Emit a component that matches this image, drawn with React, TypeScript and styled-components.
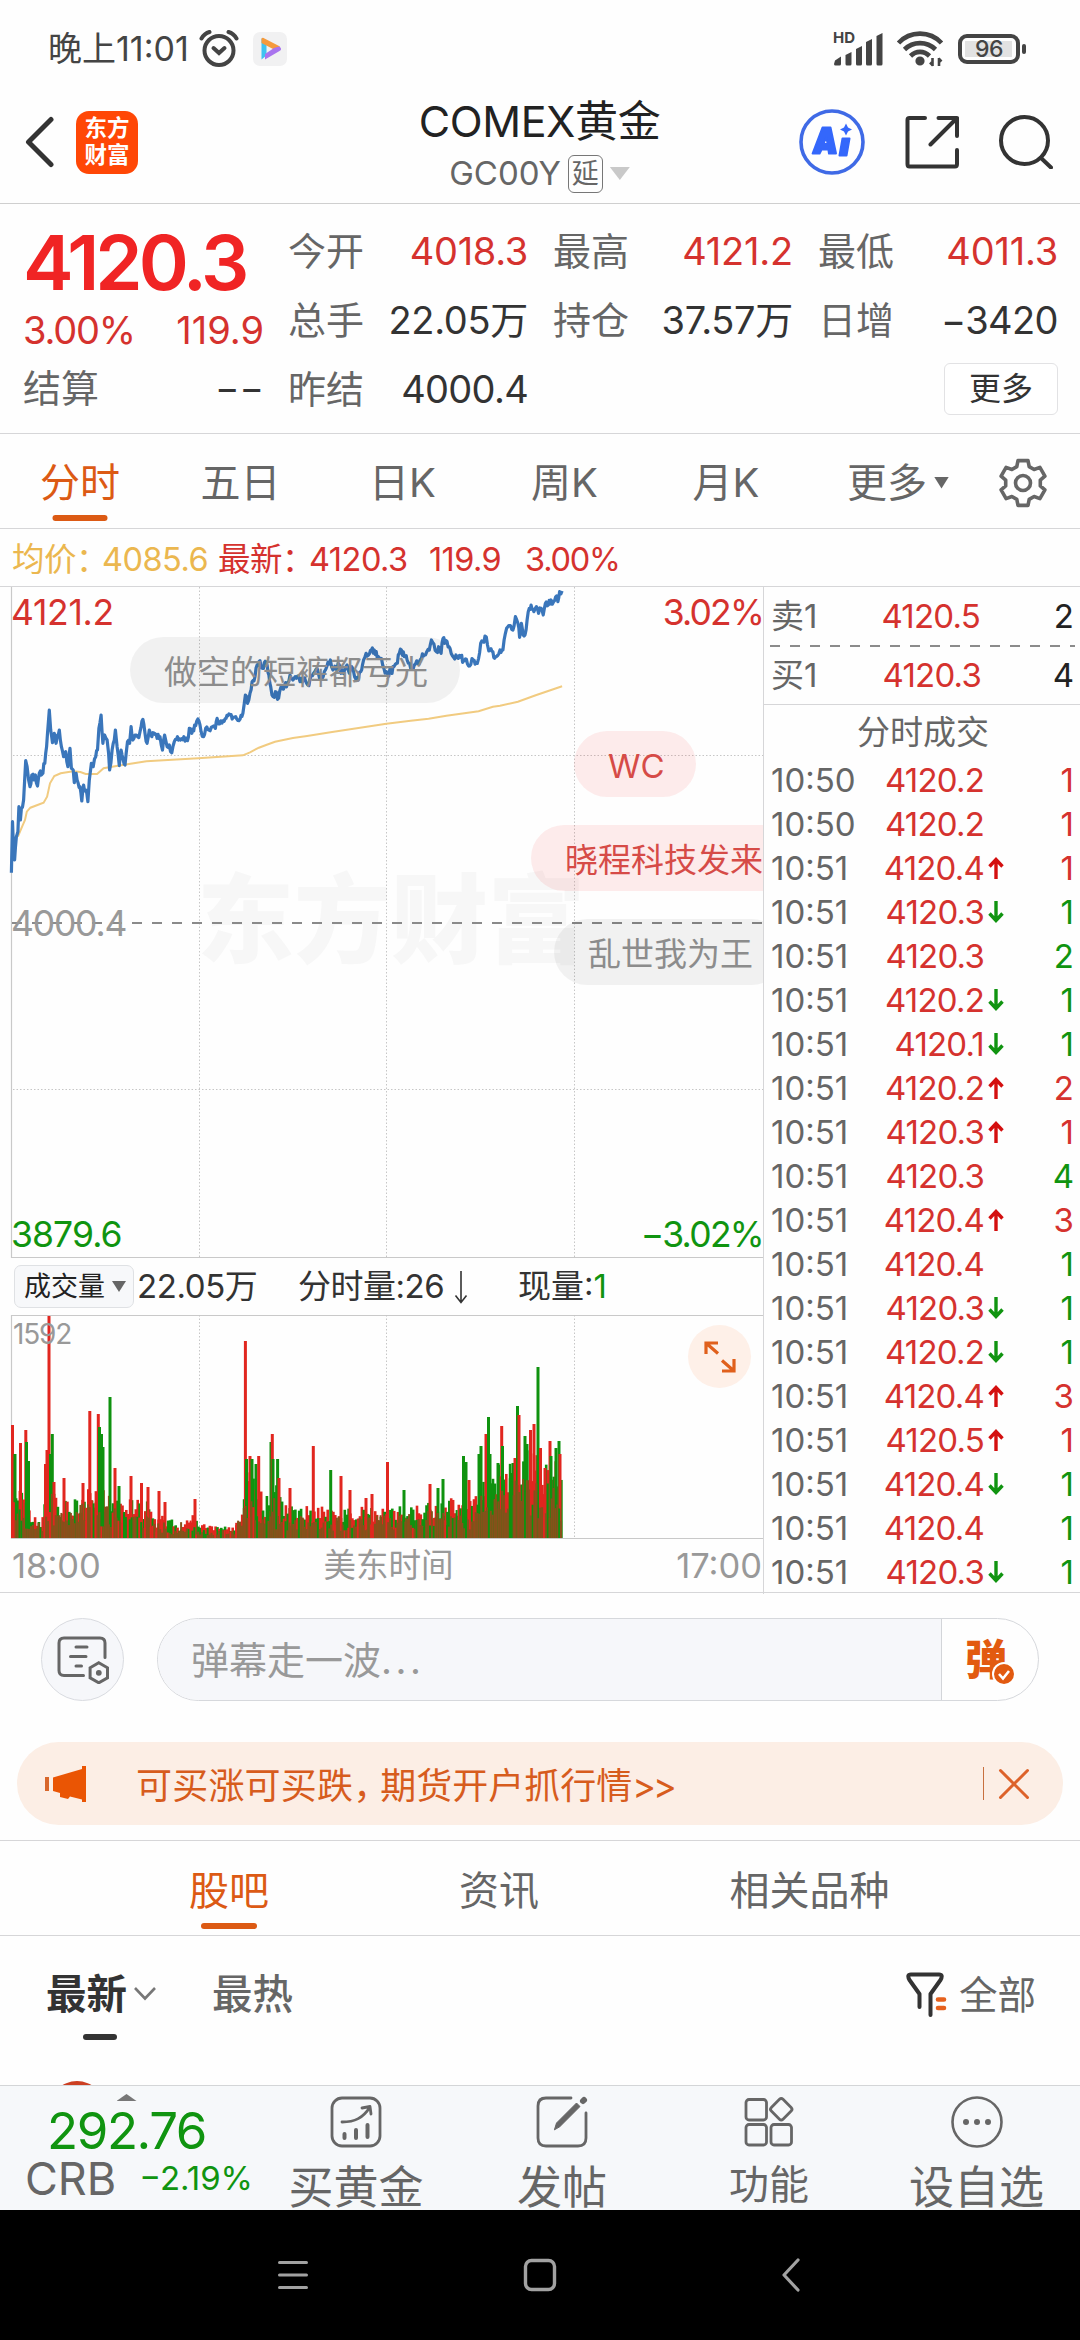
import React from "react";
import styled, { createGlobalStyle } from "styled-components";

const RED = "#d5322e";
const GREEN = "#109410";
const ORANGE = "#dc5a14";
const GREY = "#666666";
const INK = "#333333";
const LINE = "#d6d6d8";

const GlobalStyle = createGlobalStyle`
  * { box-sizing: border-box; }
  body { margin: 0; background: #fff; }
  svg { display: block; flex: none; }
`;

const Screen = styled.div`
  width: 1080px;
  height: 2340px;
  overflow: hidden;
  display: flex;
  flex-direction: column;
  background: #fefefe;
  color: ${INK};
  font-family: Inter, "Noto Sans CJK SC", sans-serif;
  font-size: 38px;
  line-height: 1;
  white-space: nowrap;
`;

const Text = styled.span<{ $size?: number; $color?: string; $track?: number; $weight?: number }>`
  font-size: ${(p) => p.$size ?? 38}px;
  color: ${(p) => p.$color ?? "inherit"};
  letter-spacing: ${(p) => p.$track ?? 0}px;
  font-weight: ${(p) => p.$weight ?? 400};
  line-height: 1;
  white-space: pre;
`;

/* ---------- status bar ---------- */

const StatusBar = styled.header`
  height: 98px;
  padding: 0 60px 0 48px;
  display: flex;
  align-items: center;
  justify-content: space-between;
  color: #444;
`;
const StatusGroup = styled.div<{ $gap: number }>`
  display: flex;
  align-items: center;
  gap: ${(p) => p.$gap}px;
`;

const AlarmIcon = () => (
  <svg width="40" height="38" viewBox="0 0 40 38" fill="none" stroke="#444" strokeWidth="4" strokeLinecap="round">
    <circle cx="20" cy="20.500" r="14.500" />
    <path d="M14.500 18l5.500 5 5.500-5" />
    <path d="M2.500 8.500C4.500 5 7 3 10.500 2M29.500 2c3.500 1 6 3 8 6.500" />
  </svg>
);

const PlayBadge = () => (
  <svg width="34" height="34" viewBox="0 0 34 34">
    <rect width="34" height="34" rx="7" fill="#f1f1f2" />
    <path d="M8.500 6.500l5 3v14l-5 4z" fill="#3fc3f0" />
    <path d="M8.500 6.500c.8-1 2-.8 3 0L27 14.500l-5 3.500L8.500 11z" fill="#f59a3c" />
    <path d="M28 17c0 1-.5 1.500-1.500 2L12 27.500v-5.500l9-6 5-1.500c1.500.8 2 1.500 2 2.500z" fill="#a974ee" />
  </svg>
);

const SignalIcon = () => (
  <svg width="52" height="44" viewBox="0 -4 52 44" fill="#444">
    <text x="1" y="12" fontSize="15" fontWeight="700" fontFamily="Inter, sans-serif">HD</text>
    <path d="M3 29.500l6-4V33q0 1.500-1.500 1.500h-4Q2 34.500 2 33z" />
    <path d="M13.500 24l6-3v12q0 1.500-1.500 1.500h-3q-1.500 0-1.500-1.500z" />
    <path d="M24 18l6-3v18q0 1.500-1.500 1.500h-3Q24 34.500 24 33z" />
    <path d="M34 11l6-3v25q0 1.500-1.500 1.500h-3Q34 34.500 34 33z" />
    <path d="M44.500 5l6-3v31q0 1.500-1.500 1.500h-3q-1.500 0-1.500-1.500z" />
  </svg>
);

const WifiIcon = () => (
  <svg width="48" height="38" viewBox="0 0 48 38" fill="none" stroke="#444" strokeWidth="4.600">
    <path d="M2.500 13C14 .5 34 .5 45.500 13" />
    <path d="M8.500 19.500c8.500-8.500 22.500-8.500 31 0" />
    <path d="M14.500 26c5.500-5.500 13.500-5.500 19 0" />
    <circle cx="24" cy="31" r="2.300" />
    <path d="M36.500 28v8M43 36v-8M34 32.500l3 3M45.500 31.500l-3-3" strokeWidth="2.600" />
  </svg>
);

const Battery = styled.div`
  position: relative;
  width: 62px;
  height: 30px;
  padding: 3px;
  border: 4px solid #444;
  border-radius: 9px;
  display: flex;
  align-items: center;
  justify-content: center;
  background: linear-gradient(#e2e2e2, #e2e2e2) 3px 50% / 47px 16px no-repeat;
  &::after {
    content: "";
    position: absolute;
    right: -10px;
    top: 6px;
    width: 4px;
    height: 10px;
    border-radius: 2px;
    background: #444;
  }
`;

/* ---------- title bar ---------- */

const TitleBar = styled.div`
  height: 106px;
  padding: 0 27px 0 25px;
  border-bottom: 1px solid #cfcfcf;
  display: grid;
  grid-template-columns: 330px 1fr 330px;
  align-items: center;
`;
const TitleSide = styled.div<{ $end?: boolean; $gap: number }>`
  display: flex;
  align-items: center;
  justify-content: ${(p) => (p.$end ? "flex-end" : "flex-start")};
  gap: ${(p) => p.$gap}px;
  padding-bottom: 17px;
`;
const Logo = styled.div`
  width: 62px;
  height: 63px;
  border-radius: 13px;
  background: #ff4706;
  color: #fff;
  display: flex;
  flex-direction: column;
  align-items: center;
  justify-content: center;
  gap: 5px;
  padding-bottom: 1px;
`;
const TitleMid = styled.div`
  display: flex;
  flex-direction: column;
  align-items: center;
  gap: 12px;
  padding: 0 0 9px 1px;
`;
const SubTitle = styled.div`
  display: flex;
  align-items: center;
  gap: 7px;
  height: 38px;
  color: ${GREY};
`;
const DelayTag = styled.span`
  width: 35px;
  height: 38px;
  border: 1.500px solid #777;
  border-radius: 6px;
  display: flex;
  align-items: center;
  justify-content: center;
  font-size: 27px;
`;
const Triangle = styled.i<{ $w: number; $h: number; $color: string; $up?: boolean }>`
  width: ${(p) => p.$w}px;
  height: ${(p) => p.$h}px;
  background: ${(p) => p.$color};
  clip-path: ${(p) => (p.$up ? "polygon(50% 0, 100% 100%, 0 100%)" : "polygon(0 0, 100% 0, 50% 100%)")};
`;

const BackIcon = () => (
  <svg width="30" height="52" viewBox="0 0 30 52" fill="none" stroke={INK} strokeWidth="5" strokeLinecap="round" strokeLinejoin="round">
    <path d="M26 3.500L3.500 26 26 48.500" />
  </svg>
);

const AiIcon = () => (
  <svg width="66" height="66" viewBox="0 0 66 66">
    <circle cx="33" cy="33" r="31" fill="none" stroke="#3f6ae6" strokeWidth="3.600" />
    <g fill="#3467fb" stroke="#3467fb" strokeWidth="2" strokeLinejoin="round">
      <path fillRule="evenodd" d="M23.500 18.500h8l5.500 26h-7l-.6-4h-6.800l-2 4h-7zm3.800 9.500l-2.800 7h4.200z" />
      <path d="M43.500 29.500h7l-3 17h-7z" />
    </g>
    <path d="M47 14.500l2 4 4 2-4 2-2 4-2-4-4-2 4-2z" fill="#3467fb" />
  </svg>
);

const ShareIcon = () => (
  <svg width="54" height="54" viewBox="0 0 54 54" fill="none" stroke={INK} strokeWidth="4" strokeLinecap="round" strokeLinejoin="round">
    <path d="M20 3H4.500Q2.500 3 2.500 5v44q0 2.500 2 2.500h45.500q2 0 2-2.500V35" />
    <path d="M33.500 3H52v18M52 3L25.500 29.500" />
  </svg>
);

const SearchIcon = () => (
  <svg width="54" height="54" viewBox="0 0 54 54" fill="none" stroke={INK} strokeWidth="4" strokeLinecap="round">
    <circle cx="25.500" cy="25.500" r="23.500" />
    <path d="M42 43l10 9.500" />
  </svg>
);

/* ---------- quote block ---------- */

const Quote = styled.section`
  height: 230px;
  border-bottom: 1px solid ${LINE};
  padding: 12px 22px 0 23px;
  display: flex;
  justify-content: space-between;
`;
const QuoteLead = styled.div`
  width: 241px;
  display: flex;
  flex-direction: column;
`;
const LeadRow = styled.div<{ $h: number }>`
  height: ${(p) => p.$h}px;
  display: flex;
  align-items: center;
  justify-content: space-between;
`;
const QuoteGrid = styled.div`
  width: 770px;
  display: grid;
  grid-template-columns: 240px 240px 240px;
  grid-auto-rows: 69px;
  column-gap: 25px;
`;
const Cell = styled.div<{ $end?: boolean }>`
  display: flex;
  align-items: center;
  justify-content: ${(p) => (p.$end ? "flex-end" : "space-between")};
`;
const MoreButton = styled.button`
  width: 114px;
  height: 52px;
  border: 1.500px solid #e2e2e4;
  border-radius: 6px;
  background: #fff;
  color: ${INK};
  font: inherit;
  font-size: 32px;
  padding: 0;
`;

const quotes: [string, string, string, number][] = [
  ["今开", "4018.3", RED, -0.3],
  ["最高", "4121.2", RED, -0.2],
  ["最低", "4011.3", RED, -0.2],
  ["总手", "22.05万", INK, -0.3],
  ["持仓", "37.57万", INK, -0.3],
  ["日增", "−3420", INK, -0.6],
  ["昨结", "4000.4", INK, -0.7],
];

/* ---------- period tabs ---------- */

const PeriodTabs = styled.nav`
  height: 95px;
  border-bottom: 1px solid ${LINE};
  display: grid;
  grid-template-columns: 160px 161px 163px 161px 162px 182px 68px;
  color: ${GREY};
`;
const PeriodTab = styled.div<{ $active?: boolean }>`
  position: relative;
  display: flex;
  align-items: center;
  justify-content: center;
  gap: 7px;
  font-size: 40px;
  padding-top: 3px;
  color: ${(p) => (p.$active ? ORANGE : GREY)};
`;
const Underline = styled.i<{ $w: number; $color: string; $bottom: number }>`
  position: absolute;
  left: 50%;
  bottom: ${(p) => p.$bottom}px;
  width: ${(p) => p.$w}px;
  height: 6px;
  border-radius: 3px;
  transform: translateX(-50%);
  background: ${(p) => p.$color};
`;

const GearIcon = () => {
  const pts: string[] = [];
  for (let i = 0; i < 6; i++) {
    const a = (i * 60 - 90) * (Math.PI / 180);
    const at = (r: number, d: number) => `${(26 + r * Math.cos(a + d)).toFixed(1)} ${(26 + r * Math.sin(a + d)).toFixed(1)}`;
    pts.push(at(17.5, -0.36), at(23, -0.22), at(23, 0.22), at(17.5, 0.36));
  }
  return (
    <svg width="52" height="52" viewBox="0 0 52 52" fill="none" stroke={GREY} strokeWidth="3.600" strokeLinejoin="round">
      <path d={`M${pts.join("L")}Z`} />
      <circle cx="26" cy="26" r="7.500" />
    </svg>
  );
};

/* ---------- market area ---------- */

const AvgBar = styled.div`
  height: 58px;
  padding: 5px 0 0 12px;
  border-bottom: 1px solid ${LINE};
  display: grid;
  grid-template-columns: 90px 116px 91px 120px 96px auto;
  align-items: center;
`;
const Market = styled.section`
  height: 1006px;
  border-bottom: 1px solid ${LINE};
  display: grid;
  grid-template-columns: 763px 1fr;
`;
const ChartColumn = styled.div`
  overflow: hidden;
  display: flex;
  flex-direction: column;
`;
const PriceChart = styled.div`
  position: relative;
  height: 671px;
  overflow: hidden;
`;
const Layer = styled.svg`
  position: absolute;
  inset: 0;
`;
const Mark = styled.span<{ $x?: number; $r?: number; $y: number; $size?: number; $color: string; $track?: number }>`
  position: absolute;
  ${(p) => (p.$x !== undefined ? `left: ${p.$x}px;` : `right: ${p.$r}px;`)}
  top: ${(p) => p.$y}px;
  transform: translateY(-50%);
  font-size: ${(p) => p.$size ?? 35.5}px;
  letter-spacing: ${(p) => p.$track ?? 0}px;
  color: ${(p) => p.$color};
`;
const Watermark = styled.span`
  position: absolute;
  left: 197px;
  top: 284px;
  font-size: 97px;
  font-weight: 900;
  color: #f7f7f7;
`;
const Bullet = styled.span<{ $x: number; $y: number; $w: number; $hot?: boolean }>`
  position: absolute;
  left: ${(p) => p.$x}px;
  top: ${(p) => p.$y}px;
  width: ${(p) => p.$w}px;
  height: 66px;
  border-radius: 33px;
  padding: 4px 0 0 34px;
  display: flex;
  align-items: center;
  font-size: 33px;
  background: ${(p) => (p.$hot ? "rgba(240, 40, 40, .085)" : "rgba(0, 0, 0, .05)")};
  color: ${(p) => (p.$hot ? "#d64b47" : "#8c8c8c")};
`;

const VolumeHeader = styled.div`
  height: 57px;
  padding-left: 14px;
  display: grid;
  grid-template-columns: 123px 161px 156px 64px auto;
  justify-content: start;
  align-items: center;
  color: ${INK};
`;
const VolumeSelect = styled.div`
  width: 120px;
  height: 43px;
  padding: 0 7px 0 9px;
  display: flex;
  align-items: center;
  justify-content: space-between;
  background: #f7f8fa;
  border: 1px solid #dfe1e4;
  border-radius: 7px;
`;
const VolumeChart = styled.div`
  position: relative;
  height: 224px;
`;
const ExpandButton = styled.div`
  position: absolute;
  left: 688px;
  top: 10px;
  width: 63px;
  height: 63px;
  border-radius: 50%;
  background: #fef0e8;
  display: flex;
  align-items: center;
  justify-content: center;
`;
const TimeAxis = styled.div`
  height: 54px;
  padding: 0 1px 0 12px;
  display: flex;
  align-items: center;
  justify-content: space-between;
  color: #999;
`;

const priceTrace: number[][] = [
  [32,1358],[35,1205],[38,1290],[41,1320],[46,1250],[50,1235],[53,1160],[57,1200],[60,1165],[66,1140],[72,1022],[76,1040],[80,1080],[84,1100],[89,1065],[95,1080],[99,1065],[105,1098],[110,1060],[116,1065],[120,1060],[128,1000],[133,940],[138,870],[142,930],[147,968],[152,940],[157,970],[161,945],[166,930],[172,980],[178,1010],[184,995],[190,1040],[196,985],[200,1045],[205,1050],[208,1088],[213,1060],[219,1090],[224,1100],[229,1143],[234,1095],[240,1110],[246,1145],[250,1080],[256,1030],[261,1040],[268,1010],[273,990],[277,925],[283,885],[288,970],[293,945],[300,960],[304,1000],[307,1050],[314,990],[320,960],[323,930],[328,980],[334,1037],[339,990],[345,1020],[350,1035],[357,965],[363,970],[367,920],[372,960],[378,945],[385,950],[392,935],[400,898],[406,940],[412,970],[418,930],[425,950],[432,940],[440,955],[448,950],[455,990],[461,945],[468,980],[474,975],[481,998],[488,965],[497,950],[505,960],[515,950],[525,962],[530,925],[537,940],[545,915],[557,903],[563,935],[570,950],[576,925],[585,930],[595,920],[603,925],[608,895],[615,912],[625,902],[633,895],[641,882],[650,897],[660,890],[672,898],[680,880],[687,825],[693,850],[700,820],[706,785],[714,770],[720,735],[728,722],[735,745],[740,728],[748,735],[753,765],[758,800],[765,830],[771,815],[777,838],[783,815],[790,800],[797,795],[805,790],[812,765],[820,780],[830,775],[840,785],[850,778],[862,795],[868,778],[878,760],[888,745],[895,775],[905,770],[915,740],[925,720],[932,750],[940,745],[950,735],[955,760],[965,750],[972,735],[978,760],[985,740],[993,770],[1003,780],[1010,755],[1018,720],[1025,700],[1032,705],[1040,690],[1048,690],[1056,712],[1065,715],[1075,745],[1085,762],[1095,755],[1103,740],[1110,730],[1118,700],[1124,690],[1132,710],[1140,720],[1150,745],[1160,735],[1170,730],[1180,715],[1188,705],[1195,695],[1202,690],[1208,660],[1215,672],[1222,695],[1228,680],[1235,700],[1240,656],[1245,670],[1252,665],[1260,685],[1270,712],[1280,712],[1290,712],[1298,722],[1306,718],[1315,738],[1325,720],[1333,728],[1340,715],[1346,670],[1352,665],[1358,648],[1365,675],[1372,690],[1380,695],[1385,715],[1390,710],[1400,690],[1408,690],[1415,640],[1422,620],[1430,618],[1436,630],[1443,590],[1450,610],[1455,652],[1460,610],[1465,645],[1470,645],[1476,600],[1482,565],[1487,555],[1495,575],[1502,560],[1508,580],[1515,565],[1521,585],[1527,550],[1535,555],[1543,540],[1550,545],[1556,530],[1562,545],[1567,515],[1574,513],
];
const averageTrace: number[][] = [
  [50,1250],[62,1220],[70,1200],[75,1175],[85,1163],[105,1155],[122,1148],[132,1130],[140,1090],[152,1068],[170,1060],[205,1054],[225,1056],[240,1062],[272,1062],[290,1045],[330,1037],[410,1024],[555,1015],[680,1006],[700,997],[725,983],[745,975],[770,965],[820,954],[860,948],[930,936],[1082,911],[1150,902],[1200,896],[1250,887],[1340,874],[1380,860],[1400,857],[1450,845],[1500,826],[1574,799],
];

const seeded = (seed: number) => () => {
  seed = (seed * 1664525 + 1013904223) % 4294967296;
  return seed / 4294967296;
};

const toPoint = ([x, y]: number[]) => [x / 2.8, y / 3 - 167];

// Adds minute-level jitter between the traced turning points.
const jagged = (trace: number[][]) => {
  const rnd = seeded(7);
  const out: string[] = [];
  trace.forEach((p, i) => {
    const [x, y] = toPoint(p);
    if (i > 0) {
      const [px, py] = toPoint(trace[i - 1]);
      const steps = Math.max(1, Math.round((x - px) / 1.1));
      for (let s = 1; s < steps; s++) {
        const t = s / steps;
        out.push(`${(px + (x - px) * t).toFixed(1)},${(py + (y - py) * t + (rnd() - 0.5) * 7).toFixed(1)}`);
      }
    }
    out.push(`${x.toFixed(1)},${y.toFixed(1)}`);
  });
  return out.join(" ");
};
const pricePoints = jagged(priceTrace);
const averagePoints = averageTrace.map((p) => toPoint(p).map((v) => v.toFixed(1)).join(",")).join(" ");

// Typical bar height along the session, then the individual peaks.
const volumeEnvelope: number[][] = [
  [11, 62], [17, 45], [24, 40], [30, 18], [42, 20], [45, 55], [52, 60], [56, 30], [62, 32], [75, 38], [85, 44], [95, 50], [104, 40], [115, 40], [125, 35], [148, 32], [154, 18], [165, 20], [178, 12], [190, 22], [204, 14], [215, 10], [235, 12], [241, 22], [246, 62], [256, 56], [264, 34], [275, 54], [282, 30], [300, 28], [330, 28], [350, 28], [375, 26], [400, 30], [425, 30], [440, 34], [460, 36], [470, 34], [479, 48], [490, 64], [505, 64], [520, 78], [540, 76], [552, 70], [561, 68],
];
const volumePeaks: [number, number, "r" | "g"][] = [
  [12.5, 113, "r"], [15, 84, "g"], [20.5, 95, "r"], [25.8, 108, "r"], [26.5, 96, "g"], [28.5, 77, "g"], [45.5, 74, "r"], [47, 88, "r"], [49, 222, "r"], [50.500, 84, "g"], [52.3, 104, "g"], [54, 56, "r"], [64, 60, "r"], [83, 55, "r"], [89.800, 127, "r"], [98.300, 124, "r"], [99.500, 111, "g"], [101.500, 104, "g"], [103, 91, "g"], [110, 141, "g"], [115, 70, "r"], [119, 52, "g"], [131, 62, "r"], [141.500, 55, "r"], [148, 51, "r"], [159, 47, "r"], [165, 36, "r"], [195, 39, "r"], [245.400, 197, "r"], [246.500, 79, "g"], [250, 82, "r"], [252, 79, "g"], [256, 74, "g"], [258.700, 82, "r"], [271, 96, "g"], [272.300, 104, "r"], [273, 79, "g"], [277.600, 79, "g"], [279, 60, "r"], [290, 50, "r"], [313.300, 92, "r"], [330.700, 68, "g"], [341, 62, "r"], [350, 48, "r"], [366, 40, "r"], [372, 44, "r"], [387.500, 76, "r"], [404, 48, "g"], [430, 54, "r"], [438, 50, "g"], [443, 59, "g"], [463.500, 82, "g"], [466, 76, "g"], [469, 58, "r"], [479, 84, "g"], [481, 92, "g"], [486, 104, "r"], [488.500, 121, "g"], [490, 84, "g"], [498, 75, "g"], [501.700, 112, "r"], [502.500, 92, "g"], [513, 75, "g"], [515, 80, "r"], [517.500, 132, "g"], [519, 123, "r"], [525, 102, "g"], [527, 94, "g"], [530.500, 108, "r"], [534, 114, "r"], [538, 171, "g"], [540.500, 90, "r"], [545, 70, "r"], [550, 97, "r"], [551, 82, "g"], [556, 90, "g"], [559, 97, "g"], [560, 84, "r"],
];
const BAR: Record<string, string> = { r: "#e1261f", g: "#0f920f", b: "#85511a" };
const volumeBars = (() => {
  const rnd = seeded(42);
  const bars: { x: number; h: number; w: number; c: string }[] = [];
  for (let x = 11; x < 562; x += 1.9) {
    const i = Math.max(1, volumeEnvelope.findIndex((e) => e[0] >= x));
    const [x0, y0] = volumeEnvelope[i - 1];
    const [x1, y1] = volumeEnvelope[i];
    const base = y0 + (y1 - y0) * ((x - x0) / (x1 - x0));
    const h = base * (0.55 + rnd() * 0.6);
    bars.push({ x, h, w: 2.6, c: rnd() > 0.5 ? "r" : "g" });
  }
  volumePeaks.forEach(([x, h, c]) => bars.push({ x: x - 1.5, h, w: 3, c }));
  for (let x = 11; x < 561; x += 1.9) {
    const i = Math.max(1, volumeEnvelope.findIndex((e) => e[0] >= x));
    const h = volumeEnvelope[i][1] * (0.25 + rnd() * 0.55);
    const k = rnd();
    bars.push({ x, h, w: 2, c: k > 0.3 ? "b" : k > 0.15 ? "r" : "g" });
  }
  return bars;
})();

const gridX = [199.5, 386.5, 574.5];

/* ---------- order book ---------- */

const Tape = styled.aside`
  border-left: 1.500px solid ${LINE};
  display: flex;
  flex-direction: column;
`;
const BookRow = styled.div<{ $h: number }>`
  height: ${(p) => p.$h}px;
  padding: 0 6px 0 7px;
  display: grid;
  grid-template-columns: 90px 123px 23px 1fr;
  align-items: center;
  justify-items: center;
`;
const Price = styled.span<{ $pull?: number }>`
  justify-self: end;
  margin-right: ${(p) => p.$pull ?? 0}px;
  font-size: 33px;
  letter-spacing: -0.8px;
  color: ${RED};
`;
const Qty = styled.span<{ $color: string }>`
  justify-self: end;
  font-size: 33px;
  color: ${(p) => p.$color};
`;
const Time = styled.span`
  justify-self: start;
  font-size: 33px;
  color: ${GREY};
`;
const Dashes = styled.div`
  height: 2px;
  margin: 0 5px 0 6px;
  background: repeating-linear-gradient(90deg, #8b8b8b 0 10px, transparent 10px 20px);
`;
const BookEnd = styled.div`
  height: 1px;
  background: ${LINE};
`;
const TapeTitle = styled.div`
  height: 53px;
  padding: 2px 0 0 2px;
  display: flex;
  align-items: center;
  justify-content: center;
  color: ${GREY};
`;

const Tick = ({ dir }: { dir: string }) => (
  <svg width="16" height="22" viewBox="0 0 16 22" fill="none" stroke={dir === "u" ? "#d40f0f" : GREEN} strokeWidth="3.400" transform={dir === "d" ? "rotate(180)" : undefined}>
    <path d="M8 22V3M1.500 9.500L8 2.500l6.500 7" />
  </svg>
);

const ticks: [string, string, string, number, string][] = [
  ["10:50", "4120.2", "", 1, "r"],
  ["10:50", "4120.2", "", 1, "r"],
  ["10:51", "4120.4", "u", 1, "r"],
  ["10:51", "4120.3", "d", 1, "g"],
  ["10:51", "4120.3", "", 2, "g"],
  ["10:51", "4120.2", "d", 1, "g"],
  ["10:51", "4120.1", "d", 1, "g"],
  ["10:51", "4120.2", "u", 2, "r"],
  ["10:51", "4120.3", "u", 1, "r"],
  ["10:51", "4120.3", "", 4, "g"],
  ["10:51", "4120.4", "u", 3, "r"],
  ["10:51", "4120.4", "", 1, "g"],
  ["10:51", "4120.3", "d", 1, "g"],
  ["10:51", "4120.2", "d", 1, "g"],
  ["10:51", "4120.4", "u", 3, "r"],
  ["10:51", "4120.5", "u", 1, "r"],
  ["10:51", "4120.4", "d", 1, "g"],
  ["10:51", "4120.4", "", 1, "g"],
  ["10:51", "4120.3", "d", 1, "g"],
];

/* ---------- comment input ---------- */

const CommentBar = styled.div`
  height: 149px;
  padding: 25px 41px 0;
  display: flex;
  gap: 33px;
`;
const RoundButton = styled.div`
  width: 83px;
  height: 83px;
  border: 1.500px solid #d9dbe0;
  border-radius: 50%;
  background: #f6f7fa;
  display: flex;
  align-items: center;
  justify-content: center;
`;
const InputPill = styled.div`
  width: 882px;
  height: 83px;
  border: 1.500px solid #d6d8dc;
  border-radius: 42px;
  overflow: hidden;
  display: flex;
`;
const InputText = styled.div`
  width: 784px;
  padding-left: 33px;
  border-right: 1.500px solid #d3d5d9;
  background: #f6f7fa;
  display: flex;
  align-items: center;
  color: #999;
`;
const BarrageToggle = styled.div`
  position: relative;
  flex: 1;
  padding-left: 23px;
  display: flex;
  align-items: center;
`;
const CheckBadge = styled.svg`
  position: absolute;
  left: 50px;
  top: 43px;
`;

const NoteIcon = () => (
  <svg width="52" height="48" viewBox="0 0 52 48" fill="none" stroke={GREY} strokeWidth="3" strokeLinecap="round">
    <path d="M26.500 39.500H7Q2 39.500 2 34.500V7Q2 2 7 2h36q5 0 5 5v14.500" />
    <path d="M19 11h11M13.500 20.500h15.500M19 30h5.500" />
    <path d="M41.800 26.800l8.700 5v10l-8.700 5-8.700-5v-10z" />
    <circle cx="41.800" cy="36.800" r="2.900" fill={GREY} stroke="none" />
  </svg>
);

const Banner = styled.div`
  height: 83px;
  margin: 0 17px;
  padding: 0 33px 0 28px;
  border-radius: 42px;
  background: #fceee5;
  display: flex;
  align-items: center;
  color: #d75c1d;
`;
const BannerText = styled.div`
  flex: 1;
  padding: 5px 0 0 49px;
  display: flex;
`;
const BannerRule = styled.i`
  width: 1.500px;
  height: 33px;
  margin-right: 14px;
  background: #c8703f;
`;

const HornIcon = () => (
  <svg width="42" height="38" viewBox="0 0 42 38" fill="#ea5504">
    <rect x="0" y="12" width="4" height="14" fill="#d8672c" />
    <path d="M8 12.500L37 4V1h4v36h-4v-2.500L25 31.500l-2 2.500-8-2v-4L8 26z" />
  </svg>
);

/* ---------- community ---------- */

const ForumTabs = styled.nav`
  height: 96px;
  margin-top: 15px;
  border-top: 1px solid ${LINE};
  border-bottom: 1px solid ${LINE};
  padding-left: 94px;
  display: grid;
  grid-template-columns: 270px 270px 351px;
`;
const ForumTab = styled.div<{ $active?: boolean }>`
  position: relative;
  display: flex;
  align-items: center;
  justify-content: center;
  padding-top: 5px;
  color: ${(p) => (p.$active ? ORANGE : GREY)};
`;
const SortRow = styled.div`
  position: relative;
  height: 118px;
  padding: 0 44px 0 46px;
  display: flex;
  align-items: center;
`;
const SortUnderline = styled.i`
  position: absolute;
  left: 83px;
  bottom: 14px;
  width: 34px;
  height: 6px;
  border-radius: 3px;
  background: ${INK};
`;
const SortItem = styled.div<{ $gap: number; $push?: boolean; $left?: number }>`
  display: flex;
  align-items: center;
  gap: ${(p) => p.$gap}px;
  margin-left: ${(p) => (p.$push ? "auto" : `${p.$left ?? 0}px`)};
`;
const FeedPeek = styled.div`
  height: 31px;
  padding: 27px 0 0 49px;
  overflow: hidden;
`;
const Avatar = styled.div`
  width: 56px;
  height: 56px;
  border-radius: 50%;
  background: #cc3f22;
`;

const FilterIcon = () => (
  <svg width="42" height="46" viewBox="0 0 42 46" fill="none" strokeWidth="4" strokeLinecap="round" strokeLinejoin="round">
    <path d="M13.500 35V22L3.500 8Q.5 2.500 5 2.500h28q4.500 0 1.500 5.500L24.500 22v21" stroke={INK} />
    <path d="M32 27.500h6M32 36h6" stroke="#e6611d" strokeWidth="4.600" />
  </svg>
);

/* ---------- bottom bar ---------- */

const BottomBar = styled.footer`
  height: 125px;
  border-top: 1px solid #d3d5d7;
  background: #f6f8fa;
  display: grid;
  grid-template-columns: 253px 206px 206px 208px 207px;
  overflow: hidden;
  color: ${GREY};
`;
const IndexBox = styled.div`
  display: flex;
  flex-direction: column;
  align-items: center;
  padding-top: 8px;
`;
const IndexValue = styled.div`
  height: 51px;
  margin-top: 4px;
  font-size: 51px;
  letter-spacing: -1.4px;
  color: ${GREEN};
`;
const IndexLine = styled.div`
  width: 100%;
  height: 44px;
  padding: 0 0 0 25px;
  display: flex;
  align-items: center;
  justify-content: space-between;
`;
const Action = styled.div`
  display: flex;
  flex-direction: column;
  align-items: center;
  padding-top: 9px;
`;
const ActionLabel = styled.div`
  height: 45px;
  margin-top: 16px;
  display: flex;
  justify-content: center;
`;

const TrendIcon = () => (
  <svg width="54" height="54" viewBox="0 0 54 54" fill="none" stroke={GREY} strokeWidth="2.800" strokeLinecap="round" strokeLinejoin="round">
    <rect x="3" y="3" width="48" height="48" rx="10" />
    <path d="M13 27c13 0 21-4 28-15M33 13l8-1.500 1 7.500" />
    <path d="M15.500 39v4M27 35v8M38.500 30v12" strokeWidth="4" />
  </svg>
);
const PostIcon = () => (
  <svg width="54" height="54" viewBox="0 0 54 54" fill="none" stroke={GREY} strokeWidth="2.800" strokeLinecap="round">
    <path d="M36 3H11Q3 3 3 11v32q0 8 8 8h32q8 0 8-8V18" />
    <path d="M19.500 34.500l2-6.500L41.500 8l3.500 3.500-20 20z" fill={GREY} strokeWidth="1" />
    <path d="M48 6l1-1" strokeWidth="6" />
  </svg>
);
const GridIcon = () => (
  <svg width="54" height="54" viewBox="0 0 54 54" fill="none" stroke={GREY} strokeWidth="2.800" strokeLinejoin="round">
    <rect x="4" y="4.500" width="20.500" height="20.500" rx="3" />
    <rect x="4" y="29.500" width="20.500" height="20.500" rx="3" />
    <rect x="29" y="29.500" width="20.500" height="20.500" rx="3" />
    <rect x="31" y="6" width="16.500" height="16.500" rx="2.500" transform="rotate(45 39.250 14.250)" />
  </svg>
);
const DotsIcon = () => (
  <svg width="54" height="54" viewBox="0 0 54 54" fill="none" stroke={GREY} strokeWidth="2.600">
    <circle cx="27" cy="27" r="24.500" />
    <g fill={GREY} stroke="none">
      <circle cx="16" cy="27" r="3" />
      <circle cx="27" cy="27" r="3" />
      <circle cx="38" cy="27" r="3" />
    </g>
  </svg>
);

const actions = [
  { label: "买黄金", size: 45, icon: <TrendIcon /> },
  { label: "发帖", size: 45, icon: <PostIcon /> },
  { label: "功能", size: 40, icon: <GridIcon /> },
  { label: "设自选", size: 45, icon: <DotsIcon /> },
];

const SystemNav = styled.div`
  height: 130px;
  padding-left: 8px;
  background: #000;
  display: grid;
  grid-template-columns: 247px 247px 255px;
  justify-content: center;
  justify-items: center;
  align-items: center;
`;

export default function App() {
  return (
    <>
      <GlobalStyle />
      <Screen>
        <StatusBar>
          <StatusGroup $gap={10}>
            <Text $size={34}>晚上11:01</Text>
            <StatusGroup $gap={14}>
              <AlarmIcon />
              <PlayBadge />
            </StatusGroup>
          </StatusGroup>
          <StatusGroup $gap={12}>
            <SignalIcon />
            <StatusGroup $gap={14}>
              <WifiIcon />
              <Battery>
                <Text $size={23} $weight={500} $track={-0.5}>96</Text>
              </Battery>
            </StatusGroup>
          </StatusGroup>
        </StatusBar>

        <TitleBar>
          <TitleSide $gap={21}>
            <BackIcon />
            <Logo>
              <Text $size={22.5} $weight={700}>东方</Text>
              <Text $size={22.5} $weight={700}>财富</Text>
            </Logo>
          </TitleSide>
          <TitleMid>
            <Text $size={43} $color="#222" $track={-0.4}>COMEX黄金</Text>
            <SubTitle>
              <Text $size={33}>GC00Y</Text>
              <DelayTag>延</DelayTag>
              <Triangle $w={20} $h={13} $color="#c9c9c9" />
            </SubTitle>
          </TitleMid>
          <TitleSide $end $gap={40}>
            <AiIcon />
            <ShareIcon />
            <SearchIcon />
          </TitleSide>
        </TitleBar>

        <Quote>
          <QuoteLead>
            <LeadRow $h={92}>
              <Text $size={76} $weight={600} $color="#f02424" $track={-4}>4120.3</Text>
            </LeadRow>
            <LeadRow $h={44}>
              <Text $color={RED} $track={-1.2}>3.00%</Text>
              <Text $color={RED}>119.9</Text>
            </LeadRow>
            <LeadRow $h={71}>
              <Text $color={GREY}>结算</Text>
              <Text $size={37}>−−</Text>
            </LeadRow>
          </QuoteLead>
          <QuoteGrid>
            {quotes.map(([label, value, color, track]) => (
              <Cell key={label}>
                <Text $color={GREY}>{label}</Text>
                <Text $color={color} $track={track}>{value}</Text>
              </Cell>
            ))}
            <Cell />
            <Cell $end>
              <MoreButton>更多</MoreButton>
            </Cell>
          </QuoteGrid>
        </Quote>

        <PeriodTabs>
          <PeriodTab $active>
            分时
            <Underline $w={55} $color={ORANGE} $bottom={7} />
          </PeriodTab>
          <PeriodTab>五日</PeriodTab>
          <PeriodTab>日K</PeriodTab>
          <PeriodTab>周K</PeriodTab>
          <PeriodTab>月K</PeriodTab>
          <PeriodTab>
            更多
            <Triangle $w={15} $h={12} $color={GREY} />
          </PeriodTab>
          <PeriodTab>
            <GearIcon />
          </PeriodTab>
        </PeriodTabs>

        <AvgBar>
          <Text $size={32.5} $color="#ebb74f" $track={-0.5}>均价：</Text>
          <Text $size={32.5} $color="#ebb74f" $track={-0.5}>4085.6</Text>
          <Text $size={32.5} $color={RED} $track={-0.5}>最新：</Text>
          <Text $size={32.5} $color={RED} $track={-0.5}>4120.3</Text>
          <Text $size={32.5} $color={RED} $track={-0.6}>119.9</Text>
          <Text $size={32.5} $color={RED} $track={-1.2}>3.00%</Text>
        </AvgBar>

        <Market>
          <ChartColumn>
            <PriceChart>
              <Watermark>东方财富</Watermark>
              <Layer width="763" height="671" viewBox="0 0 763 671" fill="none">
                <path d="M11.500 0V670.500H763" stroke="#c9c9c9" strokeWidth="1.200" />
                {gridX.map((x) => (
                  <path key={x} d={`M${x} 0V670`} stroke="#c6c6c6" strokeDasharray="1.500 2" />
                ))}
                <path d="M13 168.500H763M13 502.500H763" stroke="#c6c6c6" strokeDasharray="1.500 2" />
                <path d="M12 336H763" stroke="#8a8a8a" strokeWidth="2" strokeDasharray="10 10" />
                <polyline points={averagePoints} stroke="#f1cb80" strokeWidth="2" />
                <polyline points={pricePoints} stroke="#3a76bb" strokeWidth="3.200" strokeLinejoin="round" />
              </Layer>
              <Mark $x={11} $y={26} $color={RED} $track={-0.3}>4121.2</Mark>
              <Mark $r={0} $y={26} $color={RED} $track={-1.8}>3.02%</Mark>
              <Mark $x={11} $y={337} $color="#999" $track={-1.2}>4000.4</Mark>
              <Mark $x={11} $y={648} $color={GREEN} $track={-0.9}>3879.6</Mark>
              <Mark $r={0} $y={648} $color={GREEN} $track={-1.7}>−3.02%</Mark>
              <Bullet $x={130} $y={50} $w={330}>做空的短裤都亏光</Bullet>
              <Bullet $x={574} $y={144} $w={122} $hot>WC</Bullet>
              <Bullet $x={531} $y={238} $w={300} $hot>晓程科技发来</Bullet>
              <Bullet $x={554} $y={332} $w={231}>乱世我为王</Bullet>
            </PriceChart>

            <VolumeHeader>
              <VolumeSelect>
                <Text $size={27} $color="#222">成交量</Text>
                <Triangle $w={14} $h={11} $color={GREY} />
              </VolumeSelect>
              <Text $size={33} $track={-0.4}>22.05万</Text>
              <Text $size={33} $track={-0.5}>分时量:26</Text>
              <svg width="14" height="34" viewBox="0 0 14 34" fill="none" stroke={INK} strokeWidth="1.600">
                <path d="M7 1v31M1.500 25.500L7 32.500l5.500-7" />
              </svg>
              <Text $size={33}>
                现量:
                <Text $size={33} $color={GREEN}>1</Text>
              </Text>
            </VolumeHeader>

            <VolumeChart>
              <Layer width="763" height="224" viewBox="0 0 763 224" fill="none">
                <path d="M763 .5H11.500V223.500H763" stroke="#c9c9c9" strokeWidth="1.200" />
                {gridX.map((x) => (
                  <path key={x} d={`M${x} 0V223`} stroke="#c6c6c6" strokeDasharray="1.500 2" />
                ))}
                {volumeBars.map((b, i) => (
                  <rect key={i} x={b.x} y={223 - b.h} width={b.w} height={b.h} fill={BAR[b.c]} />
                ))}
              </Layer>
              <Mark $x={13} $y={19} $size={28} $color="#999" $track={-1.2}>1592</Mark>
              <ExpandButton>
                <svg width="34" height="34" viewBox="0 0 34 34" fill="none" stroke="#e0601c" strokeWidth="3.200">
                  <path d="M3 14V3h12M3 3l12 10.500M31 19v12H19M31 31L19 20.500" />
                </svg>
              </ExpandButton>
            </VolumeChart>

            <TimeAxis>
              <Text $size={34.5}>18:00</Text>
              <Text $size={32.5}>美东时间</Text>
              <Text $size={34.5}>17:00</Text>
            </TimeAxis>
          </ChartColumn>

          <Tape>
            <BookRow $h={58}>
              <Time>卖1</Time>
              <Price $pull={4}>4120.5</Price>
              <span />
              <Qty $color="#222">2</Qty>
            </BookRow>
            <Dashes />
            <BookRow $h={57}>
              <Time>买1</Time>
              <Price $pull={3}>4120.3</Price>
              <span />
              <Qty $color="#222">4</Qty>
            </BookRow>
            <BookEnd />
            <TapeTitle>
              <Text $size={33}>分时成交</Text>
            </TapeTitle>
            {ticks.map(([time, price, dir, qty, side], i) => (
              <BookRow key={i} $h={44}>
                <Time>{time}</Time>
                <Price>{price}</Price>
                {dir ? <Tick dir={dir} /> : <span />}
                <Qty $color={side === "r" ? RED : GREEN}>{qty}</Qty>
              </BookRow>
            ))}
          </Tape>
        </Market>

        <CommentBar>
          <RoundButton>
            <NoteIcon />
          </RoundButton>
          <InputPill>
            <InputText>
              <Text $size={38}>弹幕走一波</Text>
              <Text $size={38} $track={3.5}>...</Text>
            </InputText>
            <BarrageToggle>
              <Text $size={42} $weight={900} $color="#e25a10">弹</Text>
              <CheckBadge width="24" height="24" viewBox="0 0 24 24">
                <circle cx="12" cy="12" r="12" fill="#fff" />
                <circle cx="12" cy="12" r="10" fill="#e25a10" />
                <path d="M7 12l4 4.500 6-7.500" fill="none" stroke="#fff" strokeWidth="2.600" />
              </CheckBadge>
            </BarrageToggle>
          </InputPill>
        </CommentBar>

        <Banner>
          <HornIcon />
          <BannerText>
            <Text $size={36} $track={0.2}>可买涨可买跌</Text>
            <Text $size={36} $track={-9}>，</Text>
            <Text $size={36}>期货开户抓行情</Text>
            <Text $size={36} $track={-3}>&gt;&gt;</Text>
          </BannerText>
          <BannerRule />
          <svg width="32" height="32" viewBox="0 0 32 32" stroke="#dd622a" strokeWidth="3" strokeLinecap="round">
            <path d="M2.500 2.500l27 27M29.500 2.500l-27 27" />
          </svg>
        </Banner>

        <ForumTabs>
          <ForumTab $active>
            <Text $size={40}>股吧</Text>
            <Underline $w={56} $color={ORANGE} $bottom={6} />
          </ForumTab>
          <ForumTab>
            <Text $size={40}>资讯</Text>
          </ForumTab>
          <ForumTab>
            <Text $size={40}>相关品种</Text>
          </ForumTab>
        </ForumTabs>

        <SortRow>
          <SortItem $gap={6}>
            <Text $size={40.500} $weight={700} $color={INK}>最新</Text>
            <svg width="24" height="16" viewBox="0 0 24 16" fill="none" stroke="#777" strokeWidth="2.600">
              <path d="M2 1l10 10.500L22 1" />
            </svg>
          </SortItem>
          <SortItem $gap={0} $left={55}>
            <Text $size={40.500} $weight={500} $color={GREY}>最热</Text>
          </SortItem>
          <SortItem $gap={11} $push>
            <FilterIcon />
            <Text $size={38.500} $color={GREY}>全部</Text>
          </SortItem>
          <SortUnderline />
        </SortRow>
        <FeedPeek>
          <Avatar />
        </FeedPeek>

        <BottomBar>
          <IndexBox>
            <Triangle $w={20} $h={7} $color="#777" $up />
            <IndexValue>292.76</IndexValue>
            <IndexLine>
              <Text $size={45} $color={GREY}>CRB</Text>
              <Text $size={33} $color={GREEN}>−2.19%</Text>
            </IndexLine>
          </IndexBox>
          {actions.map((a) => (
            <Action key={a.label}>
              {a.icon}
              <ActionLabel>
                <Text $size={a.size}>{a.label}</Text>
              </ActionLabel>
            </Action>
          ))}
        </BottomBar>

        <SystemNav>
          <svg width="32" height="32" viewBox="0 0 32 32" stroke="#a2a2a2" strokeWidth="3" strokeLinecap="round">
            <path d="M2.500 3.500h27M2.500 16h27M2.500 28.500h27" />
          </svg>
          <svg width="34" height="34" viewBox="0 0 34 34" fill="none" stroke="#a2a2a2" strokeWidth="3.400">
            <rect x="2.500" y="2.500" width="29" height="29" rx="6" />
          </svg>
          <svg width="22" height="34" viewBox="0 0 22 34" fill="none" stroke="#a2a2a2" strokeWidth="3.200" strokeLinecap="round" strokeLinejoin="round">
            <path d="M18 2L4 17l14 15" />
          </svg>
        </SystemNav>
      </Screen>
    </>
  );
}
